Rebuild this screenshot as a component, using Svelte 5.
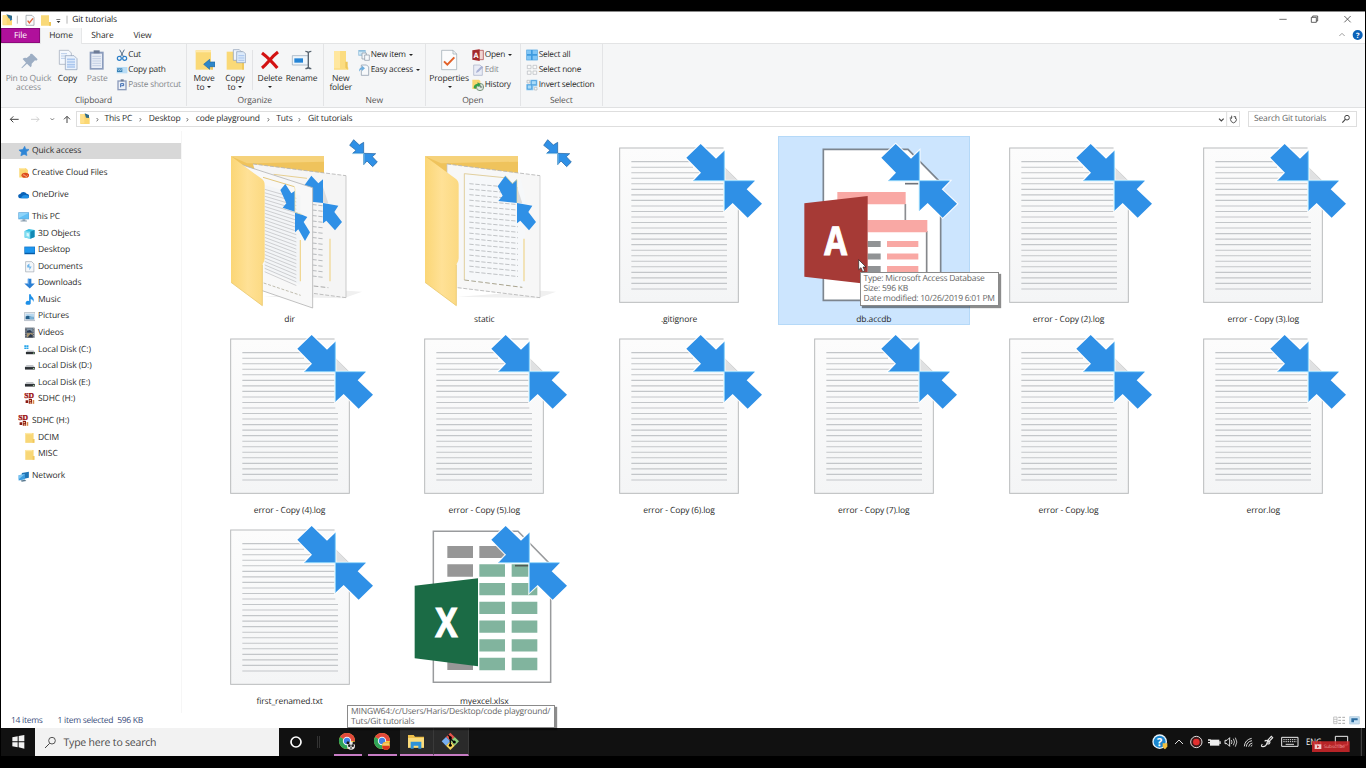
<script>
  const crumbs = ['This PC', 'Desktop', 'code playground', 'Tuts', 'Git tutorials'];
  const crumbWidths = [44.3, 47, 80.5, 31.7, 60];

  const nav = [
    { t: 'Quick access', i: 'star', sel: true },
    { t: 'Creative Cloud Files', i: 'cc', gap: 5.4 },
    { t: 'OneDrive', i: 'cloud', gap: 5.5 },
    { t: 'This PC', i: 'pc', gap: 5.5 },
    { t: '3D Objects', i: 'cube', sub: true },
    { t: 'Desktop', i: 'desktop', sub: true },
    { t: 'Documents', i: 'doc', sub: true },
    { t: 'Downloads', i: 'down', sub: true },
    { t: 'Music', i: 'music', sub: true },
    { t: 'Pictures', i: 'pic', sub: true },
    { t: 'Videos', i: 'video', sub: true },
    { t: 'Local Disk (C:)', i: 'diskc', sub: true },
    { t: 'Local Disk (D:)', i: 'disk', sub: true },
    { t: 'Local Disk (E:)', i: 'disk', sub: true },
    { t: 'SDHC (H:)', i: 'sd', sub: true },
    { t: 'SDHC (H:)', i: 'sd', gap: 5.5 },
    { t: 'DCIM', i: 'folder', sub: true },
    { t: 'MISC', i: 'folder', sub: true },
    { t: 'Network', i: 'net', gap: 5.5 }
  ];

  const files = [
    { n: 'dir', k: 'dir' },
    { n: 'static', k: 'static' },
    { n: '.gitignore', k: 'text' },
    { n: 'db.accdb', k: 'access', sel: true },
    { n: 'error - Copy (2).log', k: 'text' },
    { n: 'error - Copy (3).log', k: 'text' },
    { n: 'error - Copy (4).log', k: 'text' },
    { n: 'error - Copy (5).log', k: 'text' },
    { n: 'error - Copy (6).log', k: 'text' },
    { n: 'error - Copy (7).log', k: 'text' },
    { n: 'error - Copy.log', k: 'text' },
    { n: 'error.log', k: 'text' },
    { n: 'first_renamed.txt', k: 'text' },
    { n: 'myexcel.xlsx', k: 'excel' }
  ];

  const range = (n) => Array.from({ length: n }, (_, i) => i);
  const arrowIn = 'M353 24L399 68L424 44V134H331L354 110L310 65Z';
  const arrowOut = 'M424 135H515L491 160L537 203L494 245L449 201L424 224Z';
</script>

{#snippet glyph(name)}
  <svg class="ico" viewBox="0 0 36 36">
    {#if name === 'star'}
      <path d="M21 4l3 9 11 1-9 8 2 11-9-4-10 5 2-11-8-7 12-2z" fill="#2f86d6" stroke="#2f86d6" stroke-width="2" />
    {:else if name === 'cc'}
      <path d="M4 3h20l7 6v24H4z" fill="#fbd874" /><path d="M4 3h19v4H4z" fill="#ffe9a8" />
      <ellipse cx="23" cy="26" rx="12" ry="8" fill="#dc4b1b" /><path d="M15 27q3-6 7 0t8-1" stroke="#ffd2b0" stroke-width="2.4" fill="none" />
    {:else if name === 'cloud'}
      <path d="M1 24a6 6 0 0 1 6-8 11 11 0 0 1 20-1 8 8 0 0 1 7 10q0 4-5 4H7q-5 0-6-5z" fill="#0a63b8" />
      <path d="M10 29q1-9 12-10 10-1 12 5 0 5-5 5z" fill="#1f8fe5" />
    {:else if name === 'pc'}
      <path d="M1 4h34v22H1z" fill="#5fa6d8" /><path d="M3 6h30v18H3z" fill="#63c0f5" /><path d="M3 6h30L3 22z" fill="#8ed4fa" />
      <path d="M14 26h9v4h5v3H8v-3h6z" fill="#8c9fb0" />
    {:else if name === 'cube'}
      <path d="M2 9l13-6 18 3v22l-13 6-18-4z" fill="#37bfe3" /><path d="M2 9l18 3v22l-18-4z" fill="#7fdcf0" /><path d="M20 12l13-6v22l-13 6z" fill="#1489b4" /><path d="M8 15l8 2v10l-8-2z" fill="#d5f5fb" />
    {:else if name === 'desktop'}
      <path d="M1 5h34v24H1z" fill="#0d6fc2" /><path d="M3 7h30v17H3z" fill="#1d96ee" /><path d="M3 26h30v2H3z" fill="#0a4f90" />
    {:else if name === 'doc'}
      <path d="M5 2h19l7 7v25H5z" fill="#f4f7fa" stroke="#98a2ab" stroke-width="2" /><path d="M10 13l7-5v9h7l-7 12v-9h-7z" fill="#6fb5ea" />
    {:else if name === 'down'}
      <path d="M12 2h11v15h11L18 33 1 17h11z" fill="#2b7fd3" /><path d="M12 2h4v20l-4-5z" fill="#5aa4ea" />
    {:else if name === 'music'}
      <path d="M16 1h5q1 7 7 11 5 6 1 13 0-7-8-9v11a8 6 0 1 1-5-5z" fill="#1e90e8" />
    {:else if name === 'pic'}
      <path d="M1 5h34v25H1z" fill="#e8edf2" stroke="#9aa7b3" stroke-width="2" /><path d="M5 9h26v8H5z" fill="#b6d7ef" /><path d="M5 17q8-5 14 0l12 3v6H5z" fill="#235e88" /><path d="M16 17h15v9H18z" fill="#79b1d6" />
    {:else if name === 'video'}
      <path d="M3 2h30v32H3z" fill="#555d68" /><path d="M9 4h18v13H9z" fill="#8094a6" /><path d="M9 19h18v13H9z" fill="#a89672" /><path d="M9 12l10-3 8 8H9zM12 32l8-10 7 4v6z" fill="#2a3950" />
      <path d="M6 3v32M30 3v32" stroke="#c9ced4" stroke-width="2.5" stroke-dasharray="2.5 3" />
    {:else if name === 'diskc'}
      <path d="M1 4h6v5H1zM8 4h6v5H8zM1 11h6v5H1zM8 11h6v5H8z" fill="#27a5ea" /><path d="M10 20h20l4 6H6z" fill="#b8bcc1" /><path d="M6 25h28v7H6z" fill="#2c3034" /><path d="M28 27h4v3h-4z" fill="#9fe09c" />
    {:else if name === 'disk'}
      <path d="M8 16h20l6 7H2z" fill="#c3c6ca" /><path d="M3 22h31v8H3z" fill="#2c3034" /><path d="M28 25h4v3h-4z" fill="#a9dca5" />
    {:else if name === 'sd'}
      <text x="1" y="17" font-family="Liberation Serif" font-weight="bold" font-size="24" fill="#9c1111" stroke="#9c1111" stroke-width="1">SD</text>
      <path d="M5 23h8v8H5zM15 19h10v15H15z" fill="#8a1a10" /><path d="M17 22h5v4h-5zM18 29h5v5h-5z" fill="#f2b98c" /><path d="M27 22h5v12h-5z" fill="#d98a4c" />
    {:else if name === 'folder'}
      <path d="M4 3h26v31H4z" fill="#f8d777" /><path d="M4 3h22v4H4z" fill="#ffe9a6" /><path d="M27 22h6v12h-6z" fill="#f1c85b" />
    {:else if name === 'net'}
      <path d="M12 6l22-4v19l-22 5z" fill="#1f74b5" /><path d="M2 13l20-4v17L2 30z" fill="#3c9de0" /><path d="M2 13l20-4L2 26z" fill="#7cc5f2" /><path d="M8 30l14-3 4 4-14 3z" fill="#58788f" />
    {/if}
  </svg>
{/snippet}

{#snippet chrome(kind)}
  <svg width="19" height="19" viewBox="0 0 57 57">
    <circle cx="27" cy="27" r="24" fill="#f7cb38" />
    <path d="M27 27L6.2 15A24 24 0 0 1 51 27z" fill="#e2493b" /><path d="M27 27L6.2 15A24 24 0 0 0 27 51l9-16z" fill="#2fa458" />
    <circle cx="27" cy="27" r="12.5" fill="#f4f4f4" /><circle cx="27" cy="27" r="9.5" fill="#4180e8" />
    {#if kind === 'panda'}
      <circle cx="39" cy="41" r="12" fill="#e8e8e8" /><circle cx="30" cy="32" r="4.500" fill="#1a1a1a" /><circle cx="48" cy="33" r="4.500" fill="#1a1a1a" /><circle cx="34" cy="41" r="4" fill="#222" /><circle cx="44" cy="41" r="4" fill="#222" /><ellipse cx="39" cy="48" rx="3" ry="2" fill="#222" />
    {:else}
      <circle cx="39" cy="41" r="12" fill="#f2b33a" /><path d="M28 41h22v6q-4 7-11 7t-11-7z" fill="#d8331f" /><path d="M30 34h18v6H30z" fill="#f6c96d" />
    {/if}
  </svg>
{/snippet}

<div class="screen">
  <div class="window">
    <header class="title">
      <svg width="72" height="17" viewBox="0 0 216 51">
        <path d="M5 10h18l10 9v21H5z" fill="#fbd772" /><path d="M16 7l17 4v10l-10-2z" fill="#2d6a86" /><path d="M25 15l9 7-6 5z" fill="#256fae" /><path d="M5 10h12v28H5z" fill="#ffe08a" />
        <path d="M52 11v24M201 11v24" stroke="#8f8f8f" stroke-width="2" transform="translate(-3 0)" />
        <path d="M75 10h18l6 6v24H75z" fill="#fafafa" stroke="#8c949c" stroke-width="2" /><path d="M80 26l5 7 11-14" stroke="#e0643a" stroke-width="4" fill="none" />
        <path d="M120 10h24v25l5 4v2h-29z" fill="#f9d978" /><path d="M144 30h6v11h-6z" fill="#edc658" />
        <path d="M166 22h12v2h-12z" fill="#444" /><path d="M167 27h11l-5.500 6z" fill="#333" />
      </svg>
      <span class="name">Git tutorials</span>
      <svg class="winbtns" width="84" height="17" viewBox="0 0 252 51">
        <path d="M1 22h22" stroke="#555" stroke-width="2.500" /><path d="M97 16h15v15H97zM101 16v-4h15v15h-4" fill="none" stroke="#444" stroke-width="2.500" />
        <path d="M196 12l19 19M215 12l-19 19" stroke="#444" stroke-width="2.500" />
      </svg>
    </header>

    <div class="tabs">
      <div class="tab file">File</div>
      <div class="tab home">Home</div>
      <div class="tab share">Share</div>
      <div class="tab view">View</div>
      <svg class="help" width="26" height="14" viewBox="0 0 78 42">
        <path d="M4 24l8-8 8 8" fill="none" stroke="#8a8a8a" stroke-width="2.500" /><circle cx="59" cy="21" r="15" fill="#0c62b8" />
        <text x="59" y="29" text-anchor="middle" font-family="Open Sans" font-weight="bold" font-size="22" fill="#fff">?</text>
      </svg>
    </div>

    <div class="ribbon">
      <section style="width:186px">
        <div class="tools">
          <div class="big dim" style="width:55px">
            <svg viewBox="0 0 66 66"><path d="M42 10l17 17-4 4-4-1-10 10q1 9-3 11L27 40 12 54l-2-2 14-15-10-11q4-5 12-3l11-9-1-3z" transform="translate(0 4)" fill="#9daec4" /></svg>
            <span>Pin to Quick<br />access</span>
          </div>
          <div class="big" style="width:23px">
            <svg viewBox="0 0 66 66"><path d="M7 4h28l8 8v34H7z" fill="#f4f8fd" stroke="#9aa5b5" stroke-width="2" /><path d="M12 14h18M12 21h18M12 28h18" stroke="#b7cdea" stroke-width="3" /><path d="M25 20h26l9 9v33H25z" fill="#eaf2fc" stroke="#8799b4" stroke-width="2" /><path d="M30 31h24M30 39h24M30 47h24M30 54h24" stroke="#a9c6ee" stroke-width="5" /></svg>
            <span>Copy</span>
          </div>
          <div class="big dim" style="width:36.500px">
            <svg viewBox="0 0 66 66"><path d="M11 8h42v54H11z" fill="#8b9cbd" /><path d="M16 14h32v43H16z" fill="#e8edf6" /><path d="M23 4h18v9H23z" fill="#6d7b96" /><path d="M19 22h26M19 29h26M19 36h26M19 43h26M19 50h26" stroke="#c3cfe4" stroke-width="3" /></svg>
            <span>Paste</span>
          </div>
          <div class="list">
            <div><svg viewBox="0 0 36 36"><path d="M11 2l12 22M25 2L13 24" stroke="#54708c" stroke-width="3" /><ellipse cx="10" cy="28" rx="6" ry="6" fill="none" stroke="#2b7fc8" stroke-width="3.500" /><ellipse cx="26" cy="28" rx="6" ry="6" fill="none" stroke="#2b7fc8" stroke-width="3.500" /></svg>Cut</div>
            <div><svg viewBox="0 0 36 36"><path d="M2 9h32v19H2z" fill="#b8dcf5" /><path d="M3 13h16v11H3z" fill="#3780b4" /><path d="M5 15l3 6 3-6 3 6 3-6" fill="none" stroke="#cfe8f8" stroke-width="1.500" /></svg>Copy path</div>
            <div class="dim"><svg viewBox="0 0 36 36"><path d="M4 4h28v30H4z" fill="#8c9bbb" /><path d="M8 8h20v22H8z" fill="#edf1f8" /><path d="M14 1h9v6h-9z" fill="#6d7b96" /><path d="M14 25V14h9v6h-7" fill="none" stroke="#3a68b0" stroke-width="3" /></svg>Paste shortcut</div>
          </div>
        </div>
        <footer>Clipboard</footer>
      </section>

      <section style="width:136.500px">
        <div class="tools">
          <div class="big" style="width:34px">
            <svg viewBox="0 0 66 66"><path d="M8 4h46v58H8z" fill="#fad977" /><path d="M8 4h46v6H8z" fill="#ffe9a8" /><path d="M54 40h6v22h-6z" fill="#efc95e" /><path d="M66 39v14H50v8L32 46l18-15v8z" fill="#2d86c9" stroke="#1c67a4" stroke-width="2" /></svg>
            <span>Move<br />to <i></i></span>
          </div>
          <div class="big" style="width:28px">
            <svg viewBox="0 0 66 66"><path d="M8 8h46v54H8z" fill="#fad977" /><path d="M54 40h6v22h-6z" fill="#efc95e" /><path d="M28 2h18l6 6v26H28z" fill="#eef4fc" stroke="#8799b4" stroke-width="2" /><path d="M38 8h20l7 7v26H38z" fill="#dceafa" stroke="#8799b4" stroke-width="2" /><path d="M43 20h18M43 27h18M43 34h18" stroke="#a5c3ee" stroke-width="3" /></svg>
            <span>Copy<br />to <i></i></span>
          </div>
          <div class="rule"></div>
          <div class="big" style="width:32px">
            <svg viewBox="0 0 66 66"><path d="M9 12q12 9 25 22 12 12 21 23M57 9Q41 21 29 37 18 50 9 57" fill="none" stroke="#d31212" stroke-width="9.500" /></svg>
            <span>Delete<br /><i></i></span>
          </div>
          <div class="big" style="width:31px">
            <svg viewBox="0 0 66 66"><path d="M4 20h48v28H4z" fill="#eef5fb" stroke="#8fa2b5" stroke-width="2" /><path d="M10 28h26v13H10z" fill="#2484d6" /><path d="M43 7q8 0 9 5 1-5 9-5M52 10v46M43 59q8 0 9-5 1 5 9 5" fill="none" stroke="#5a6672" stroke-width="4" /></svg>
            <span>Rename</span>
          </div>
        </div>
        <footer>Organize</footer>
      </section>

      <section style="width:102.500px">
        <div class="tools">
          <div class="big" style="width:34.500px">
            <svg viewBox="0 0 66 66"><path d="M12 6h36v42l7 8v6H12z" fill="#fbdc80" /><path d="M12 6h18v52H12z" fill="#ffe79f" /><path d="M46 38h7v24l-7-6z" fill="#edc65a" /></svg>
            <span>New<br />folder</span>
          </div>
          <div class="list">
            <div><svg viewBox="0 0 36 36"><path d="M1 3h22v17H1z" fill="#8cbcdc" /><path d="M3 8h18v9H3z" fill="#cfe8f6" /><path d="M12 12h13v18H12z" fill="#f2f6fa" stroke="#8693a0" stroke-width="2" /><path d="M20 18h14v16H20z" fill="#f7f9fb" stroke="#8693a0" stroke-width="2" /></svg>New item <i></i></div>
            <div><svg viewBox="0 0 36 36"><path d="M10 3h16l6 6v25H10z" fill="#f7f9fb" stroke="#8090a3" stroke-width="2" /><path d="M3 23q0-12 9-13V5l9 8-9 8v-5q-6 1-9 7z" fill="#6eaede" /></svg>Easy access <i></i></div>
          </div>
        </div>
        <footer>New</footer>
      </section>

      <section style="width:94.500px">
        <div class="tools">
          <div class="big" style="width:46px">
            <svg viewBox="0 0 66 66"><path d="M11 4h34l11 11v47H11z" fill="#fbfcfd" stroke="#95a3ae" stroke-width="2" /><path d="M45 4v11h11" fill="none" stroke="#95a3ae" stroke-width="2" /><path d="M18 37l10 10 21-22" fill="none" stroke="#e2622a" stroke-width="6" /></svg>
            <span>Properties<br /><i></i></span>
          </div>
          <div class="list">
            <div><svg viewBox="0 0 36 36"><path d="M19 4h15v28H19z" fill="#f0d5d3" stroke="#a4373a" stroke-width="2" /><path d="M1 4l22-3v35L1 32z" fill="#a4282b" /><text x="12" y="26" text-anchor="middle" font-family="Open Sans" font-weight="bold" font-size="22" fill="#fff">A</text></svg>Open <i></i></div>
            <div class="dim"><svg viewBox="0 0 36 36"><path d="M5 3h19l7 7v24H5z" fill="#e9ecf6" stroke="#a3acc4" stroke-width="2" /><path d="M12 27l2-7L29 5l5 5-15 14z" fill="#a9b1d4" /></svg>Edit</div>
            <div><svg viewBox="0 0 36 36"><path d="M1 2h20l4 4v24H1z" fill="#f8d570" /><circle cx="24" cy="24" r="11" fill="#dfe9df" stroke="#68866b" stroke-width="2.500" /><path d="M24 17v7h7" stroke="#455" stroke-width="2.500" fill="none" /><path d="M5 27q0-12 12-13V9l9 9-9 7v-5q-6 1-6 10z" fill="#34a04a" /></svg>History</div>
          </div>
        </div>
        <footer>Open</footer>
      </section>

      <section style="width:82.500px">
        <div class="tools">
          <div class="list sel">
            <div><svg viewBox="0 0 36 36"><path d="M1 2h34v32H1z" fill="#3d9be0" /><path d="M3 4h12v11H3zM20 4h13v11H20zM3 20h12v12H3zM20 20h13v12H20z" fill="#82c6f5" /></svg>Select all</div>
            <div><svg viewBox="0 0 36 36"><path d="M4 4h11v10H4zM21 4h11v10H21zM4 21h11v10H4zM21 21h11v10H21z" fill="#fafafa" stroke="#b3b8bd" stroke-width="2" /></svg>Select none</div>
            <div><svg viewBox="0 0 36 36"><path d="M13 2h21v20H22v12H1V15h12z" fill="#7fc2f0" /><path d="M16 5h15v12H16zM4 18h13v12H4z" fill="#aadcf9" stroke="#3d94d6" stroke-width="2" /><path d="M3 4h8v8H3zM25 25h8v8h-8z" fill="#f5f5f5" stroke="#adb3b8" stroke-width="2" /></svg>Invert selection</div>
          </div>
        </div>
        <footer>Select</footer>
      </section>
    </div>

    <div class="address">
      <svg class="arrows" width="75" height="22" viewBox="0 0 225 66">
        <path d="M28 34H53M37 25l-9 9 9 9" fill="none" stroke="#444" stroke-width="3" /><path d="M90 34h24M106 26l8 8-8 8" fill="none" stroke="#c9c9c9" stroke-width="2.500" />
        <path d="M149 31l5 5 5-5" fill="none" stroke="#777" stroke-width="3" /><path d="M198 45V25M189 34l9-9 9 9" fill="none" stroke="#444" stroke-width="3" />
      </svg>
      <div class="path">
        <svg width="12" height="12" viewBox="0 0 36 36"><path d="M4 3h16l12 11v19H4z" fill="#fbd772" /><path d="M17 1l13 5v9l-9-1z" fill="#2d6a86" /><path d="M4 3h12v28H4z" fill="#ffe08a" /></svg>
        <b class="first"><svg width="5" height="7" viewBox="0 0 15 21"><path d="M5 6l4 5-4 5" fill="none" stroke="#555" stroke-width="2.500" /></svg></b>
        {#each crumbs as c, i}
          <span class="crumb" style="width:{crumbWidths[i]}px">{c}{#if i < 4}<svg width="5" height="7" viewBox="0 0 15 21"><path d="M5 6l4 5-4 5" fill="none" stroke="#555" stroke-width="2.500" /></svg>{/if}</span>
        {/each}
        <svg class="refresh" width="25" height="15" viewBox="0 0 75 45">
          <path d="M15 20l7 7 7-7" fill="none" stroke="#444" stroke-width="3.500" /><path d="M38 0v45" stroke="#ddd" stroke-width="3" />
          <path d="M53 17a8.500 8.500 0 1 0 11 0M53 11v7h-6M59 14h6v7" fill="none" stroke="#555" stroke-width="3" />
        </svg>
      </div>
      <div class="find"><span>Search Git tutorials</span>
        <svg width="10" height="10" viewBox="0 0 30 30"><circle cx="18" cy="11" r="7" fill="none" stroke="#444" stroke-width="3" /><path d="M13 16L4 26" stroke="#444" stroke-width="3.500" /></svg>
      </div>
    </div>

    <main>
      <nav>
        {#each nav as n}
          <div class={['row', n.sub && 'sub', n.sel && 'picked']} style="margin-top:{n.gap ?? 0}px">{@render glyph(n.i)}<span>{n.t}</span></div>
        {/each}
      </nav>

      <div class="grid">
        {#each files as f}
          <div class={['item', f.sel && 'selected']}>
            <svg width="192" height="177" viewBox="0 0 576 531">
              {#if f.k === 'text'}
                <rect x="110" y="36" width="356" height="463" fill="url(#paper)" stroke="#b9bbbd" stroke-width="3" />
                {#each range(24) as l}
                  <path d="M145 {77 + l * 16.6}H{l > 1 && l < 11 ? 424 : l < 2 ? 330 : 432}" stroke="#c3c6c9" stroke-width="3.300" />
                {/each}
                <path d="M424 92L470 137H424z" fill="#e0e1e2" /><path d="M424 92L466 135" stroke="#bbb" stroke-width="2" /><path d="M421 20H480V130L467 134 424 92z" fill="#fff" />
              {:else if f.k === 'access'}
                <path d="M136 40H390L488 140V493H136z" fill="#fff" stroke="#7d858e" stroke-width="5" /><path d="M381 143h43" stroke="#6d737a" stroke-width="5" />
                <path d="M178 204H380V260H178z" fill="#fff" /><path d="M382 204V252" stroke="#8b8d91" stroke-width="5" /><path d="M178 168H383V205H178z" fill="#f9a8a4" />
                <path d="M446 285V440" stroke="#85878b" stroke-width="5" /><path d="M269 252H448V289H269z" fill="#f9a8a4" />
                {#each range(3) as l}
                  <path d="M269 {315 + l * 37.5}h39v18h-39z" fill="#919395" /><path d="M327 {315 + l * 37.5}h94v18h-94z" fill="#f9a8a4" />
                {/each}
                <path d="M79 202L269 180V444L79 422z" fill="#a63a36" />
                <text transform="translate(173 357) scale(.84 1)" text-anchor="middle" font-family="Open Sans" font-weight="bold" font-size="118" fill="#fff" stroke="#fff" stroke-width="3">A</text>
              {:else if f.k === 'excel'}
                <path d="M136 40H390L488 140V493H136z" fill="#fff" stroke="#999b9d" stroke-width="4.500" /><path d="M178 84h77v36h-77zM274 84h77v36h-77zM178 139h77v37h-77zM178 420h77v36h-77z" fill="#979797" />
                {#each range(6) as l}
                  <path d="M274 {139 + l * 56.1}h77v37h-77zM371 {139 + l * 56.1}h77v37h-77z" fill="#81b49e" />
                {/each}
                <path d="M381 143h43" stroke="#4f5a55" stroke-width="5" />
                <path d="M80 203L270 181V445L80 421z" fill="#1b6b45" />
                <text transform="translate(175 358) scale(.82 1)" text-anchor="middle" font-family="Open Sans" font-weight="bold" font-size="122" fill="#fff" stroke="#fff" stroke-width="3">X</text>
              {:else}
                <g transform="translate(49 -18)">
                  <path d="M160 500L400 505 455 485 410 482z" fill="#f0f0f0" />
                  <path d="M62 79H341V200H62z" fill="#efc35c" /><path d="M62 79H341V95L110 100z" fill="#f6d27a" />
                  {#if f.k === 'static'}
                    <path d="M128 102L407 137V503L160 475 128 440z" fill="#f7f7f7" /><path d="M128 102L407 137M160 473L407 503" fill="none" stroke="#b3b3b3" stroke-width="2.500" stroke-dasharray="12 5" /><path d="M407 137V503M128 102V130" stroke="#c4c4c4" stroke-width="2" />
                    <path d="M180 131L350 148 362 200V472L180 450z" fill="#f6f8fa" /><path d="M300 143L180 131V450" fill="none" stroke="#dcc68c" stroke-width="2.500" /><path d="M180 450L354 472" stroke="#a9a48f" stroke-width="3" stroke-dasharray="14 7" />
                    {#each range(17) as l}
                      <path d="M195 {161 + l * 16.5}L341 {174 + l * 16.6}" stroke="#c0c3c6" stroke-width="3" stroke-dasharray="13 5" />
                    {/each}
                    <path d="M359 326V454" stroke="#efd48a" stroke-width="3.500" />
                    <path d="M338 170L354 220 338 218z" fill="#ddd" />
                    <path d="M303 137L324 160 338 148V219L282 213 295 197 280 169z" fill="#2f90e6" /><path d="M338 219L384 227 372 246 395 276 374 301 348 272 338 280z" fill="#2f90e6" /><path d="M303 137L324 161 338 149V219" fill="none" stroke="#f2dc92" stroke-width="2" />
                  {:else}
                    <path d="M128 102L407 137V503L240 485z" fill="#f5f5f5" /><path d="M128 102L407 137M407 503L300 489" fill="none" stroke="#b3b3b3" stroke-width="2.500" stroke-dasharray="12 5" /><path d="M407 137V503" stroke="#c0c0c0" stroke-width="2.500" />
                    <path d="M190 133L290 145" stroke="#e3c77c" stroke-width="2.500" />
                    {#each range(17) as l}
                      <path d="M306 {174 + l * 16.500}L341 {178 + l * 16.500}" stroke="#b8bbbe" stroke-width="3.300" stroke-dasharray="13 5" />
                    {/each}
                    <path d="M310 468l44 5" stroke="#aaa" stroke-width="3" stroke-dasharray="14 7" /><path d="M359 326V454" stroke="#efd48a" stroke-width="3.500" /><path d="M338 170L354 220 338 218z" fill="#ddd" />
                    <path d="M303 137L324 160 338 148V219L282 213 295 197 280 169z" fill="#2f90e6" /><path d="M338 219L384 227 372 246 395 276 374 301 348 272 338 280z" fill="#2f90e6" />
                    <path d="M90 103L307 173V534L150 480z" fill="#f8f8f8" stroke="#b5b5b5" stroke-width="2.500" />
                    <path d="M158 142L252 170" stroke="#e3c77c" stroke-width="3" /><path d="M163 165L270 196V465L163 420z" fill="#f3f5f7" />
                    {#each range(25) as l}
                      <path d="M163 {178 + l * 10.300}L258 {205 + l * 10.900}" stroke="#bec0c3" stroke-width="2.200" />
                    {/each}
                    <path d="M160 459L271 496" stroke="#b5b1a0" stroke-width="2.500" stroke-dasharray="9 5" /><path d="M270 330V454" stroke="#efd48a" stroke-width="3.500" />
                    <path d="M225 162L243 190 254 182V245L217 233 228 220 210 180z" fill="#2f90e6" /><path d="M254 245L291 261 280 276 299 307 284 333 264 298 254 307z" fill="#2f90e6" />
                    <path d="M252 170l2 9v68l20 6" fill="none" stroke="#f4e3a8" stroke-width="2.500" />
                  {/if}
                  <path d="M62 79L152 145Q163 152 163 164V385Q163 395 156 404V527L62 457z" fill="url(#fold)" /><path d="M156 404V527L62 457" fill="none" stroke="#eac96e" stroke-width="2.500" />
                  <path d="M430 29L447 45 460 37V70H427L437 61 418 46zM460 70L496 71 486 80 501 96 487 110 470 93 460 104z" fill="#2f90e6" stroke="#1d5f9f" stroke-width="2" />
                  <path d="M425 71h36v34" fill="none" stroke="#9fe0fa" stroke-width="2" />
                </g>
              {/if}
              {#if f.k === 'text' || f.k === 'access' || f.k === 'excel'}
                <path d="{arrowIn}{arrowOut}" fill="#2f90e6" stroke="#fff" stroke-width="7" paint-order="stroke" stroke-opacity=".85" />
                <path d="M331 134H515M424 44V224" stroke="#8fd4fa" stroke-width="3" />
              {/if}
            </svg>
            <span>{f.n}</span>
          </div>
        {/each}
      </div>
    </main>

    <div class="status">
      <span>14 items</span><span>1 item selected&nbsp; 596 KB</span>
      <svg width="27" height="11" viewBox="0 0 81 33"><path d="M2 6h10v20H2zM2 13h10M2 20h10" fill="none" stroke="#aaa" stroke-width="2" /><path d="M16 7h8M28 7h8M16 16h8M28 16h8M16 25h8M28 25h8" stroke="#aaa" stroke-width="3" /><path d="M50 5h29v22H50z" fill="#c7e0f3" stroke="#a9c4d8" stroke-width="2" /><path d="M55 10h19v6H63v6h-8z" fill="#2c6c9f" /></svg>
    </div>
  </div>

  <div class="taskbar">
    <svg class="start" width="34" height="28" viewBox="0 0 102 84"><path d="M34 28l16-3v15H34zM53 24l17-3v19H53zM34 43h16v15l-16-3zM53 43h17v19l-17-4z" fill="#f2f2f2" /></svg>
    <div class="type"><svg width="13" height="13" viewBox="0 0 39 39"><circle cx="24" cy="14" r="10" fill="none" stroke="#444" stroke-width="2.700" /><path d="M17 22L3 36" stroke="#444" stroke-width="3" /></svg><span>Type here to search</span></div>
    <div class="slot cortana"><svg width="34" height="28" viewBox="0 0 102 84"><circle cx="51" cy="42" r="15" fill="none" stroke="#fff" stroke-width="5" /></svg></div>
    <div class="sep"></div>
    <div class="slot app">{@render chrome('panda')}</div>
    <div class="slot app">{@render chrome('fries')}</div>
    <div class="slot app open">
      <svg width="18" height="17" viewBox="0 0 54 51"><path d="M3 6h17l4 5h27v33H3z" fill="#eebf4a" /><path d="M3 15h48v29H3z" fill="#fbdc7c" /><path d="M11 26h32v21h-9v-9H20v9h-9z" fill="#2f92d8" /></svg>
    </div>
    <div class="slot app open">
      <svg width="19" height="19" viewBox="0 0 57 57"><path d="M28 2L41 15 28 28 15 15z" fill="#e4534a" /><path d="M15 15L28 28 15 41 2 28z" fill="#77aef0" /><path d="M41 15L54 28 41 41 28 28z" fill="#8fd07c" /><path d="M28 28L41 41 28 54 15 41z" fill="#f6d65c" /><path d="M21 9l7 7v25M28 20l11 10" fill="none" stroke="#111" stroke-width="4" /><circle cx="28" cy="17" r="4.500" /><circle cx="40" cy="30" r="4.500" /><circle cx="28" cy="40" r="4.500" /></svg>
    </div>
    <svg class="tray" width="215" height="28" viewBox="0 0 645 84">
      <circle cx="29" cy="41" r="22" fill="#e9f4fb" /><circle cx="29" cy="41" r="18" fill="#1a86cf" /><text x="29" y="53" text-anchor="middle" font-family="Open Sans" font-weight="bold" font-size="33" fill="#fff">?</text><path d="M38 46h14v9q-4 8-7 9-5-2-7-9z" fill="#f3bf3e" />
      <path d="M75 48l12-12 12 12" fill="none" stroke="#ddd" stroke-width="3" />
      <circle cx="139" cy="42" r="17" fill="#3a1b1b" stroke="#ddd" stroke-width="3" /><circle cx="139" cy="42" r="10" fill="#e23030" />
      <path d="M180 35h28v18h-28z" fill="#eee" /><path d="M208 40h4v8h-4zM174 34h8v4h-8zM174 42h8v4h-8z" fill="#eee" />
      <path d="M225 37h6l8-8v26l-8-8h-6z" fill="none" stroke="#e5e5e5" stroke-width="3" /><path d="M244 36q4 6 0 12M250 32q7 10 0 20M256 29q9 13 0 27" fill="none" stroke="#e5e5e5" stroke-width="2.500" />
      <path d="M283 55q2-20 22-24M289 56q1-15 17-18M296 56q1-9 11-11M303 56q0-4 4-5" fill="none" stroke="#dadada" stroke-width="3" />
      <path d="M337 48q-6 8 2 8 9 0 12-11t9-3q-1 8-8 5M350 40l14-15 4 4-14 15M344 40q3-4 7-2" fill="none" stroke="#e5e5e5" stroke-width="3.500" />
      <path d="M395 28h49v27h-49z" fill="none" stroke="#eee" stroke-width="3" /><path d="M400 35h40M400 41h40" stroke="#ddd" stroke-width="3" stroke-dasharray="4 2.500" /><path d="M407 49h25" stroke="#ddd" stroke-width="3" />
      <text x="468" y="52" textLength="47" lengthAdjust="spacingAndGlyphs" font-family="Open Sans" font-size="27" fill="#f0f0f0">ENG</text>
      <path d="M556 25h37v26h-13l-6 7v-7h-18z" fill="none" stroke="#eee" stroke-width="3" />
      <path d="M486 40h113v32H486z" fill="#d5282c" fill-opacity=".85" /><path d="M494 49h20v14h-20z" fill="#f1cfcf" /><path d="M501 52l7 4-7 4z" fill="#c92a2a" />
      <text x="521" y="61" textLength="64" lengthAdjust="spacingAndGlyphs" font-family="Open Sans" font-size="14" fill="#e99a9a">Subscribe</text>
      <path d="M634 0v84" stroke="#555" stroke-width="2.500" />
    </svg>
  </div>

  <div class="tip info">Type: Microsoft Access Database<br />Size: 596 KB<br />Date modified: 10/26/2019 6:01 PM</div>
  <div class="tip task">MINGW64:/c/Users/Haris/Desktop/code playground/<br />Tuts/Git tutorials</div>
  <svg class="cursor" width="9" height="14" viewBox="0 0 27 42"><path d="M2 2v30l7-6 5 12 6-3-5-11h9z" fill="#fff" stroke="#222" stroke-width="2" /></svg>

  <svg class="defs" width="0" height="0">
    <defs>
      <linearGradient id="paper" x1="0" y1="0" x2="0" y2="1"><stop offset="0" stop-color="#fcfcfc" /><stop offset="1" stop-color="#f4f5f6" /></linearGradient>
      <linearGradient id="fold" x1="0" y1="0" x2="1" y2="0"><stop offset="0" stop-color="#fbd676" /><stop offset=".5" stop-color="#ffe196" /><stop offset="1" stop-color="#fbd981" /></linearGradient>
    </defs>
  </svg>
</div>

<style>
  :global(body) { background: #000; overflow: hidden; }
  .screen {
    position: relative; box-sizing: border-box; width: 1366px; height: 768px; padding: 11px 1px 12px; overflow: hidden;
    display: flex; flex-direction: column; background: #000; color: #2b2b2b;
    font: 8.5px/10px "Open Sans", "Noto Sans", sans-serif; letter-spacing: -0.1px; text-rendering: geometricPrecision;
  }
  svg { display: block; flex: none; }
  .window { display: flex; flex-direction: column; height: 717px; background: #fff; border-top: 1px solid #888; box-sizing: border-box; }
  .title { display: flex; align-items: center; height: 16px; }
  .title .name { color: #222; letter-spacing: -.15px; margin-left: -.7px; }
  .winbtns { margin-left: auto; margin-right: 2px; }
  .tabs { display: flex; height: 16px; line-height: 16px; text-align: center; border-bottom: 1px solid #e3e4e5; box-sizing: border-box; }
  .tab { box-sizing: border-box; height: 15px; }
  .file { width: 39px; background: #b0109b; color: #fff; border: 1px solid #8d0a7c; line-height: 14px; }
  .home { width: 42px; height: 16px; background: #f5f6f7; border: 1px solid #e6e7e8; border-width: 0 1px; }
  .share { width: 41px; }
  .view { width: 39px; }
  .help { margin-left: auto; margin-right: 1px; }
  .ribbon { display: flex; height: 64px; box-sizing: border-box; background: #f5f6f7; border-bottom: 1px solid #e0e1e2; letter-spacing: -.15px; }
  section { display: flex; flex-direction: column; box-sizing: border-box; border-right: 1px solid #e3e4e6; height: 62px; }
  .tools { display: flex; height: 52px; }
  section footer { text-align: center; color: #555; line-height: 10px; }
  .big { display: flex; flex-direction: column; align-items: center; padding-top: 5px; box-sizing: border-box; text-align: center; white-space: nowrap; flex: none; }
  .big svg { width: 22px; height: 22px; }
  .big span { margin-top: 2.5px; line-height: 9px; }
  .dim { color: #85888c; }
  i { display: inline-block; border: 2px solid transparent; border-top: 2.5px solid #222; border-bottom: 0; vertical-align: middle; margin-left: 1px; }
  .rule { width: 1px; height: 40px; margin: 6px 1px 0 3px; background: #e2e3e5; }
  .list { display: flex; flex-direction: column; padding-top: 3px; white-space: nowrap; font-size: 8.3px; letter-spacing: -.22px; }
  .list div { display: flex; align-items: center; gap: .7px; height: 15.2px; }
  .list svg { width: 12px; height: 12px; }
  .list i { margin-left: 2px; }
  .list.sel { padding-left: 5.5px; }
  .address { display: flex; align-items: center; height: 23px; }
  .path { display: flex; align-items: center; width: 1164px; height: 16px; box-sizing: border-box; border: 1px solid #dedede; }
  .path > svg:first-child { margin-left: 2px; }
  .first { padding: 0 4.5px 0 4px; }
  .crumb { display: flex; align-items: center; justify-content: space-between; box-sizing: border-box; white-space: nowrap; letter-spacing: -.17px; }
  .crumb svg { margin-right: 5.5px; }
  .refresh { margin-left: auto; }
  .find { display: flex; align-items: center; justify-content: space-between; box-sizing: border-box; width: 109px; height: 16px; margin-left: 8px; padding: 0 5px; border: 1px solid #dedede; color: #666; letter-spacing: -.17px; }
  main { display: flex; height: 583px; }
  nav { box-sizing: border-box; width: 181px; padding-top: 12px; border-right: 1px solid #f6f6f6; }
  .row { display: flex; align-items: center; gap: 3px; height: 16.55px; padding-left: 16.5px; }
  .row.sub { padding-left: 22.5px; }
  .row.picked { background: #d8d8d8; width: 163px; }
  .ico { width: 11.500px; height: 11.500px; }
  .grid { display: grid; grid-template-columns: repeat(6, 192px); grid-auto-rows: 189px; gap: 2px 2.740px; padding: 5px 0 0 11.600px; }
  .item { display: flex; flex-direction: column; align-items: center; box-sizing: border-box; }
  .item.selected { background: #cce5fe; box-shadow: inset 0 0 0 1px #b5d9f8; }
  .item span { margin-top: 2px; }
  .status { display: flex; align-items: center; height: 15px; padding-left: 10px; color: #3a4d7c; letter-spacing: -.28px; }
  .status span { margin-right: 15px; }
  .status svg { margin-left: auto; margin-right: 5px; }
  .taskbar { display: flex; height: 28px; background: #111; }
  .type { display: flex; align-items: center; gap: 6.5px; width: 244px; box-sizing: border-box; padding-left: 9px; background: #f2f2f2; color: #4a4a4a; font-size: 10.500px; letter-spacing: -.2px; }
  .type span { padding-top: 1px; }
  .slot { display: flex; align-items: center; justify-content: center; width: 34px; position: relative; }
  .sep { width: 3px; height: 12px; margin: 8px 10.500px 0 4px; border: 1px solid #333; border-width: 0 1px; box-sizing: border-box; }
  .app { box-sizing: border-box; border-bottom: 2px solid #c77cc4; width: 28.500px; margin: 0 3px; height: 28px; }
  .app.open { background: #2a2a2a; width: 34.500px; margin: 0; border-right: 1px solid #3a3a3a; }
  .tray { margin-left: auto; }
  .tip { position: absolute; box-sizing: border-box; background: #fff; border: 1px solid #8a8a8a; box-shadow: 2px 2px 1px rgba(0, 0, 0, .45); color: #666; white-space: nowrap; padding: 1px 3px; line-height: 10.2px; letter-spacing: -.22px; }
  .info { left: 859.500px; top: 271.500px; width: 139px; height: 34px; letter-spacing: -.26px; }
  .task { left: 347px; top: 705px; width: 208px; height: 23px; letter-spacing: -.18px; }
  .cursor { position: absolute; left: 858px; top: 259px; }
  .defs { position: absolute; }
</style>
